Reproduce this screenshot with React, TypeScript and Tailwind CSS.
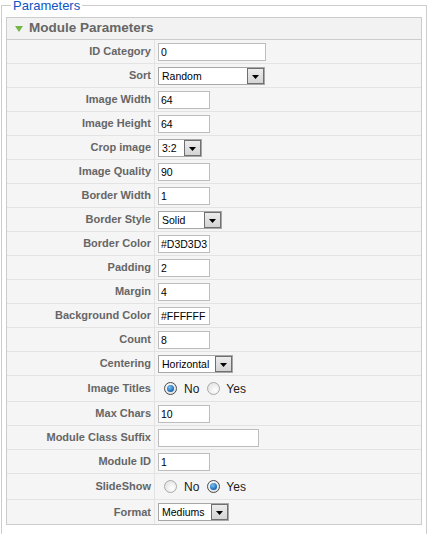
import React from "react"

type Field =
    | { label: string; kind: "text"; value: string; width: number }
    | { label: string; kind: "select"; value: string; width: number }
    | { label: string; kind: "radio"; value: "No" | "Yes" }

const fields: Field[] = [
    { label: "ID Category", kind: "text", value: "0", width: 108 },
    { label: "Sort", kind: "select", value: "Random", width: 107 },
    { label: "Image Width", kind: "text", value: "64", width: 52 },
    { label: "Image Height", kind: "text", value: "64", width: 52 },
    { label: "Crop image", kind: "select", value: "3:2", width: 44 },
    { label: "Image Quality", kind: "text", value: "90", width: 52 },
    { label: "Border Width", kind: "text", value: "1", width: 52 },
    { label: "Border Style", kind: "select", value: "Solid", width: 64 },
    { label: "Border Color", kind: "text", value: "#D3D3D3", width: 52 },
    { label: "Padding", kind: "text", value: "2", width: 52 },
    { label: "Margin", kind: "text", value: "4", width: 52 },
    { label: "Background Color", kind: "text", value: "#FFFFFF", width: 52 },
    { label: "Count", kind: "text", value: "8", width: 52 },
    { label: "Centering", kind: "select", value: "Horizontal", width: 75 },
    { label: "Image Titles", kind: "radio", value: "No" },
    { label: "Max Chars", kind: "text", value: "10", width: 52 },
    { label: "Module Class Suffix", kind: "text", value: "", width: 101 },
    { label: "Module ID", kind: "text", value: "1", width: 52 },
    { label: "SlideShow", kind: "radio", value: "Yes" },
    { label: "Format", kind: "select", value: "Mediums", width: 71 },
]

function Radio({ checked }: { checked: boolean }) {
    return checked ? (
        <span className="flex h-[13px] w-[13px] shrink-0 items-center justify-center rounded-full border border-[#4a4a4a] bg-[radial-gradient(circle_at_40%_35%,#ffffff,#d8d8d8)]">
            <span className="h-[7px] w-[7px] rounded-full bg-[radial-gradient(circle_at_40%_35%,#7cc4f2,#1266b8_70%,#0b4f94)]" />
        </span>
    ) : (
        <span className="block h-[13px] w-[13px] shrink-0 rounded-full border border-[#a9a9a9] bg-[radial-gradient(circle_at_65%_65%,#ffffff,#dcdcdc)]" />
    )
}

function Control({ field }: { field: Field }) {
    if (field.kind === "radio") {
        return (
            <div className="flex items-center pl-[6px] text-[12px] text-[#1a1a1a]">
                <Radio checked={field.value === "No"} />
                <span className="ml-[7px]">No</span>
                <span className="ml-[8px] flex">
                    <Radio checked={field.value === "Yes"} />
                </span>
                <span className="ml-[6px]">Yes</span>
            </div>
        )
    }
    if (field.kind === "select") {
        return (
            <div
                className="flex h-[18px] items-stretch border border-[#a7a7a7] bg-white"
                style={{ width: field.width }}
            >
                <span className="flex-1 overflow-hidden whitespace-nowrap pl-[3px] text-[10.5px] leading-[16px] text-black">
                    {field.value}
                </span>
                <span className="flex w-[17px] items-end justify-center border border-[#6f6f6f] bg-[linear-gradient(#ececec,#d4d4d4)] pb-[4px]">
                    <svg width="7" height="4" viewBox="0 0 7 4">
                        <path d="M0 0h7L3.5 4z" fill="#000" />
                    </svg>
                </span>
            </div>
        )
    }
    return (
        <div
            className="h-[18px] overflow-hidden whitespace-nowrap border border-[#bdbdbd] bg-white pl-[2px] text-[10.5px] leading-[16px] text-black"
            style={{ width: field.width }}
        >
            {field.value}
        </div>
    )
}

export default function App() {
    return (
        <div className="bg-white font-['Liberation_Sans',Arial,sans-serif]">
            <fieldset className="mx-[1px] -mt-[2px] border border-[#cccccc] px-[4px] pb-[9px] pt-[4px]">
                <legend className="ml-[5px] px-[2px] text-[13px] leading-[15px] text-[#0b55c4]">
                    Parameters
                </legend>

                <div className="border border-[#cccccc] bg-[#f5f5f5]">
                    {/* Slider header */}
                    <div className="flex h-[22px] items-center border-b border-[#cccccc] bg-[#f2f2f2]">
                        <svg className="ml-[8px]" width="8" height="6" viewBox="0 0 8 6">
                            <path d="M0 0h8L4 6z" fill="#74b743" />
                        </svg>
                        <span className="ml-[6px] text-[13.5px] font-bold text-[#666666]">
                            Module Parameters
                        </span>
                    </div>

                    {/* Params table */}
                    {fields.map((field, i) => (
                        <div
                            key={field.label}
                            className={`flex ${field.kind === "radio" ? "h-[26px]" : "h-[24px]"} ${
                                i === fields.length - 1 ? "" : "border-b border-[#e3e3e3]"
                            }`}
                        >
                            <div className="flex w-[148px] shrink-0 items-center justify-end border-r border-[#e3e3e3] pr-[3px] text-[11px] font-bold text-[#666666]">
                                {field.label}
                            </div>
                            <div className="flex items-center pl-[3px]">
                                <Control field={field} />
                            </div>
                        </div>
                    ))}
                </div>
            </fieldset>
        </div>
    )
}
